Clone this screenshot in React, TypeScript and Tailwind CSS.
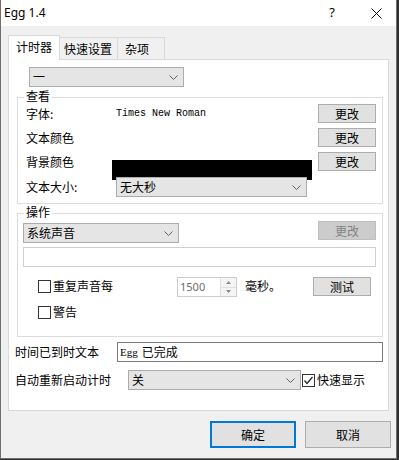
import React from "react"

function Chevron() {
  return (
    <svg width="9" height="5" viewBox="0 0 9 5" className="shrink-0">
      <polyline points="0.5,0.5 4.5,4.5 8.5,0.5" fill="none" stroke="#606060" strokeWidth="1" />
    </svg>
  )
}

function Select({ value, className }: { value: string; className: string }) {
  return (
    <div
      className={`relative flex h-[20px] items-center justify-between border border-[#acacac] bg-[#e5e5e5] pl-[3px] pr-[5px] ${className}`}
    >
      <span className="leading-[16px]">{value}</span>
      <Chevron />
    </div>
  )
}

function Btn({ label, className = "" }: { label: string; className?: string }) {
  return (
    <button
      className={`flex h-[19px] w-[58px] shrink-0 items-center justify-center border border-[#adadad] bg-[#e1e1e1] leading-[16px] ${className}`}
    >
      {label}
    </button>
  )
}

function Check({ checked = false }: { checked?: boolean }) {
  return (
    <span className="flex h-[13px] w-[13px] shrink-0 items-center justify-center border border-[#333333] bg-white">
      {checked && (
        <svg width="11" height="11" viewBox="0 0 11 11">
          <polyline points="1.5,5.5 4,8.5 9.5,2" fill="none" stroke="#222" strokeWidth="1.2" />
        </svg>
      )}
    </span>
  )
}

export default function App() {
  return (
    <div className="h-[460px] w-[399px] bg-[#2f2f2f] font-['Noto_Sans_CJK_SC',sans-serif] text-[12px] text-black">
      <div className="flex h-[459px] w-[397px] flex-col border-b border-l border-r border-[#6e6e6e] bg-[#f0f0f0]">
        {/* title bar */}
        <div className="flex h-[26px] shrink-0 items-center bg-white pl-[3px]">
          <span className="font-['Noto_Sans',sans-serif] text-[12px] leading-[16px]">Egg 1.4</span>
          <span className="ml-auto mr-[36px] font-['Noto_Sans',sans-serif] text-[13px]">?</span>
          <svg width="11" height="11" viewBox="0 0 11 11" className="mr-[14px]">
            <path d="M0.5 0.5 L10.5 10.5 M10.5 0.5 L0.5 10.5" stroke="#111" strokeWidth="1" />
          </svg>
        </div>

        <div className="flex flex-col pl-[7px] pt-[9px]">
          {/* tabs */}
          <div className="flex items-end">
            <div className="relative z-10 -mb-px h-[25px] w-[52px] border border-b-0 border-[#d9d9d9] bg-white pl-[7px] pt-[3px] leading-[16px]">
              计时器
            </div>
            <div className="-ml-px h-[22px] w-[59px] border border-b-0 border-[#d9d9d9] bg-[#f0f0f0] pl-[4px] pt-[3px] leading-[16px]">
              快速设置
            </div>
            <div className="-ml-px h-[22px] w-[48px] border border-b-0 border-[#d9d9d9] bg-[#f0f0f0] pl-[7px] pt-[3px] leading-[16px]">
              杂项
            </div>
          </div>

          {/* panel */}
          <div className="flex h-[352px] w-[381px] flex-col border border-[#d9d9d9] bg-white pl-[8px] pr-[5px]">
            <Select value="一" className="ml-[12px] mt-[7px] w-[155px]" />

            {/* 查看 */}
            <div className="mt-[10px] flex flex-col border border-[#dcdcdc] pb-[6px] pl-[8px] pr-[6px]">
              <span className="-ml-[2px] -mt-[10px] w-fit bg-white px-[2px] leading-[16px]">查看</span>
              <div className="flex h-[19px] items-start">
                <span className="w-[90px] leading-[19px]">字体:</span>
                <span className="font-['Liberation_Mono',monospace] text-[10px] leading-[19px]">Times New Roman</span>
                <Btn label="更改" className="ml-auto" />
              </div>
              <div className="mt-[5px] flex h-[19px] items-start">
                <span className="w-[90px] leading-[19px]">文本颜色</span>
                <Btn label="更改" className="ml-auto" />
              </div>
              <div className="mt-[5px] flex h-[19px] items-start">
                <span className="w-[90px] leading-[19px]">背景颜色</span>
                <div className="-ml-[4px] mt-[8px] h-[20px] w-[200px] bg-black" />
                <Btn label="更改" className="ml-auto" />
              </div>
              <div className="mt-[6px] flex h-[20px] items-center">
                <span className="w-[90px] leading-[16px]">文本大小:</span>
                <Select value="无大秒" className="w-[191px]" />
              </div>
            </div>

            {/* 操作 */}
            <div className="mt-[9px] flex flex-col border border-[#dcdcdc] pb-[16px] pl-[5px] pr-[6px]">
              <span className="-mt-[10px] ml-[1px] w-fit bg-white px-[2px] leading-[16px]">操作</span>
              <div className="mt-[1px] flex items-start">
                <Select value="系统声音" className="mt-[2px] w-[156px]" />
                <button className="ml-auto flex h-[19px] w-[58px] items-center justify-center border border-[#bfbfbf] bg-[#cccccc] leading-[16px] text-[#838383]">
                  更改
                </button>
              </div>
              <div className="mt-[4px] h-[20px] border border-[#cfcfcf] bg-white" />
              <div className="mt-[10px] flex h-[20px] items-start pl-[15px]">
                <span className="mt-[1px] flex h-[16px] w-[139px] items-center gap-[2px]">
                  <Check />
                  <span className="leading-[16px]">重复声音每</span>
                </span>
                <div className="flex h-[20px] w-[60px] border border-[#cccccc] bg-white">
                  <span className="flex-1 pl-[2px] font-['Noto_Sans',sans-serif] text-[11px] leading-[18px] text-[#6d6d6d]">1500</span>
                  <div className="flex w-[16px] flex-col">
                    <div className="flex flex-1 items-center justify-center border-b border-l border-[#e0e0e0] bg-[#f4f4f4]">
                      <svg width="5" height="3" viewBox="0 0 5 3">
                        <polygon points="2.5,0 5,3 0,3" fill="#8a8a8a" />
                      </svg>
                    </div>
                    <div className="flex flex-1 items-center justify-center border-l border-[#e0e0e0] bg-[#f4f4f4]">
                      <svg width="5" height="3" viewBox="0 0 5 3">
                        <polygon points="0,0 5,0 2.5,3" fill="#8a8a8a" />
                      </svg>
                    </div>
                  </div>
                </div>
                <span className="ml-[8px] mt-[1px] leading-[16px]">毫秒。</span>
                <Btn label="测试" className="ml-auto mr-[5px] w-[57px]" />
              </div>
              <div className="mt-[7px] flex h-[16px] items-center gap-[2px] pl-[15px]">
                <Check />
                <span className="leading-[16px]">警告</span>
              </div>
            </div>

            <div className="-ml-[2px] mt-[5px] flex h-[20px] items-center">
              <span className="w-[102px] leading-[16px]">时间已到时文本</span>
              <div className="flex h-[20px] flex-1 items-center border border-[#7a7a7a] bg-white pl-[2px]">
                <span className="font-['Liberation_Serif',serif] text-[11px]">Egg</span>
                <span className="ml-[4px] leading-[16px]">已完成</span>
              </div>
            </div>

            <div className="-ml-[2px] mt-[8px] flex h-[20px] items-center">
              <span className="w-[113px] leading-[16px]">自动重新启动计时</span>
              <Select value="关" className="w-[173px]" />
              <span className="ml-[1px] flex items-center gap-[2px]">
                <Check checked />
                <span className="leading-[16px]">快速显示</span>
              </span>
            </div>
          </div>

          {/* dialog buttons */}
          <div className="mt-[10px] flex justify-end gap-[9px] pr-[5px]">
            <button className="flex h-[27px] w-[86px] items-center justify-center border-2 border-[#0078d7] bg-[#e1e1e1] leading-[16px]">
              确定
            </button>
            <button className="flex h-[27px] w-[86px] items-center justify-center border border-[#adadad] bg-[#e1e1e1] leading-[16px]">
              取消
            </button>
          </div>
        </div>
      </div>
    </div>
  )
}
